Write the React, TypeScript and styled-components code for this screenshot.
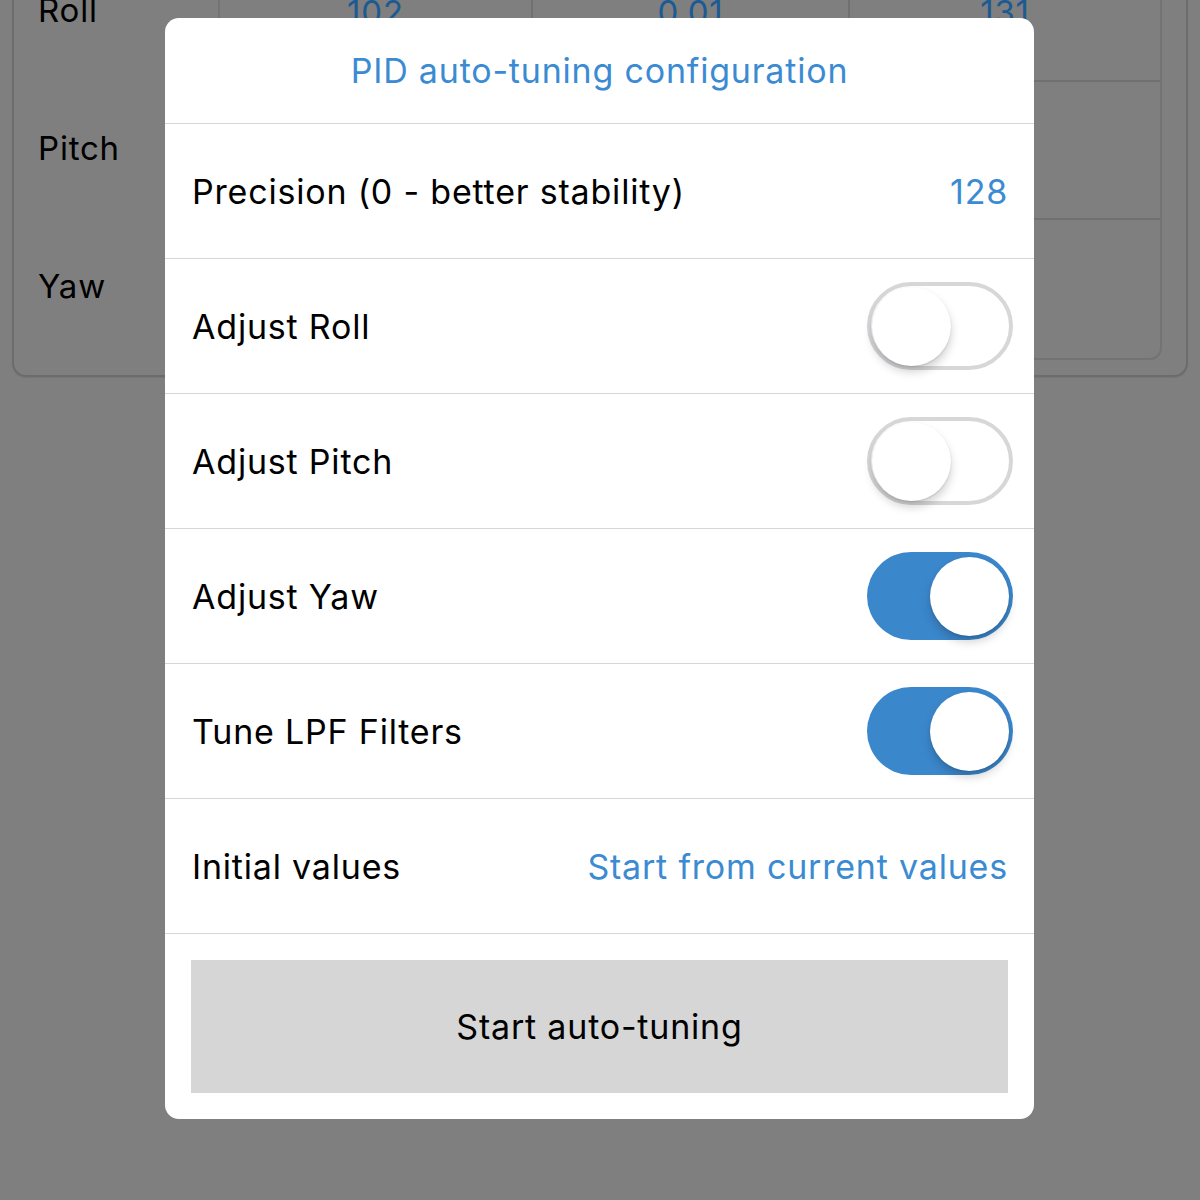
import React, { useState } from "react";
import styled, { createGlobalStyle } from "styled-components";

const GlobalStyle = createGlobalStyle`
  html, body { margin: 0; padding: 0; }
  body {
    font-family: Inter, "Noto Sans", "Liberation Sans", sans-serif;
    -webkit-font-smoothing: antialiased;
  }
  * { box-sizing: border-box; }
`;

const BLUE = "#3b8bd3";

const Page = styled.div`
  position: relative;
  width: 1200px;
  height: 1200px;
  overflow: hidden;
  background: #7f7f7f;
`;

const BgCard = styled.div`
  margin: -100px 12px 0 12px;
  height: 477px;
  border: 2px solid #6c6c6c;
  border-radius: 14px;
  display: grid;
  grid-template-columns: 204px 1fr;
  padding: 0 24px 21px 0;
  box-shadow: 0 1px 1px rgba(0, 0, 0, 0.08);
`;

const LabelCol = styled.div`
  display: grid;
  grid-template-rows: 40px repeat(3, 138px);
`;

const BgLabel = styled.div`
  display: flex;
  align-items: center;
  padding-left: 24px;
  font-size: 33px;
  letter-spacing: 0.8px;
  color: #000;
  transform: translateY(-1px);
`;

const Table = styled.div`
  border: 2px solid #737373;
  border-radius: 0 0 12px 12px;
  display: grid;
  grid-template-columns: 313px 317px 1fr;
  grid-template-rows: 40px repeat(3, 138px);
`;

const Cell = styled.div<{ $last?: boolean; $bottom?: boolean }>`
  display: flex;
  align-items: center;
  justify-content: center;
  border-right: ${(p) => (p.$last ? "none" : "2px solid #707070")};
  border-bottom: ${(p) => (p.$bottom ? "none" : "2px solid #707070")};
  font-size: 33px;
  letter-spacing: 0.8px;
  color: #1c5a93;
`;

const Modal = styled.div`
  position: absolute;
  left: 165px;
  top: 18px;
  width: 869px;
  background: #fff;
  border-radius: 14px;
  overflow: hidden;
  display: flex;
  flex-direction: column;
`;

const Title = styled.div`
  height: 106px;
  display: flex;
  align-items: center;
  justify-content: center;
  font-size: 34px;
  letter-spacing: 0.8px;
  color: ${BLUE};
  border-bottom: 1.5px solid #d6d6d6;
`;

const Row = styled.div<{ $toggle?: boolean }>`
  height: 135px;
  display: flex;
  align-items: center;
  justify-content: space-between;
  padding: 0 ${(p) => (p.$toggle ? "21px" : "27px")} 0 27px;
  border-bottom: 1.5px solid #d6d6d6;
  font-size: 34px;
  letter-spacing: 0.8px;
`;

const Label = styled.span`
  color: #000;
`;

const Value = styled.span`
  color: ${BLUE};
  margin-right: -1px;
`;

const Track = styled.button<{ $on: boolean }>`
  position: relative;
  width: 146px;
  height: 88px;
  border-radius: 44px;
  padding: 0;
  cursor: pointer;
  border: ${(p) => (p.$on ? "none" : "4px solid #d7d7da")};
  background: ${(p) => (p.$on ? "#3b87cc" : "#fff")};
  transition: background 0.2s;
`;

const Knob = styled.span<{ $on: boolean }>`
  position: absolute;
  top: ${(p) => (p.$on ? "5px" : "1px")};
  left: ${(p) => (p.$on ? "63px" : "1px")};
  width: 79px;
  height: 79px;
  border-radius: 50%;
  background: #fff;
  box-shadow: 0 6px 10px rgba(0, 0, 0, 0.18), 0 1px 2px rgba(0, 0, 0, 0.12);
`;

const ButtonArea = styled.div`
  padding: 26px 26px 26px 26px;
`;

const StartButton = styled.button`
  width: 100%;
  height: 133px;
  border: none;
  background: #d6d6d6;
  font-family: inherit;
  font-size: 34px;
  letter-spacing: 0.8px;
  color: #000;
  cursor: pointer;
`;

function Toggle({ initial }: { initial: boolean }) {
  const [on, setOn] = useState(initial);
  return (
    <Track $on={on} onClick={() => setOn(!on)} aria-pressed={on}>
      <Knob $on={on} />
    </Track>
  );
}

export default function App() {
  return (
    <Page>
      <GlobalStyle />
      <BgCard>
        <LabelCol>
          <span />
          <BgLabel>Roll</BgLabel>
          <BgLabel>Pitch</BgLabel>
          <BgLabel>Yaw</BgLabel>
        </LabelCol>
        <Table>
          <Cell>P</Cell>
          <Cell>I</Cell>
          <Cell $last>D</Cell>
          <Cell>102</Cell>
          <Cell>0.01</Cell>
          <Cell $last>131</Cell>
          <Cell />
          <Cell />
          <Cell $last />
          <Cell $bottom />
          <Cell $bottom />
          <Cell $last $bottom />
        </Table>
      </BgCard>
      <Modal>
        <Title>PID auto-tuning configuration</Title>
        <Row>
          <Label>Precision (0 - better stability)</Label>
          <Value>128</Value>
        </Row>
        <Row $toggle>
          <Label>Adjust Roll</Label>
          <Toggle initial={false} />
        </Row>
        <Row $toggle>
          <Label>Adjust Pitch</Label>
          <Toggle initial={false} />
        </Row>
        <Row $toggle>
          <Label>Adjust Yaw</Label>
          <Toggle initial={true} />
        </Row>
        <Row $toggle>
          <Label>Tune LPF Filters</Label>
          <Toggle initial={true} />
        </Row>
        <Row>
          <Label>Initial values</Label>
          <Value>Start from current values</Value>
        </Row>
        <ButtonArea>
          <StartButton>Start auto-tuning</StartButton>
        </ButtonArea>
      </Modal>
    </Page>
  );
}
